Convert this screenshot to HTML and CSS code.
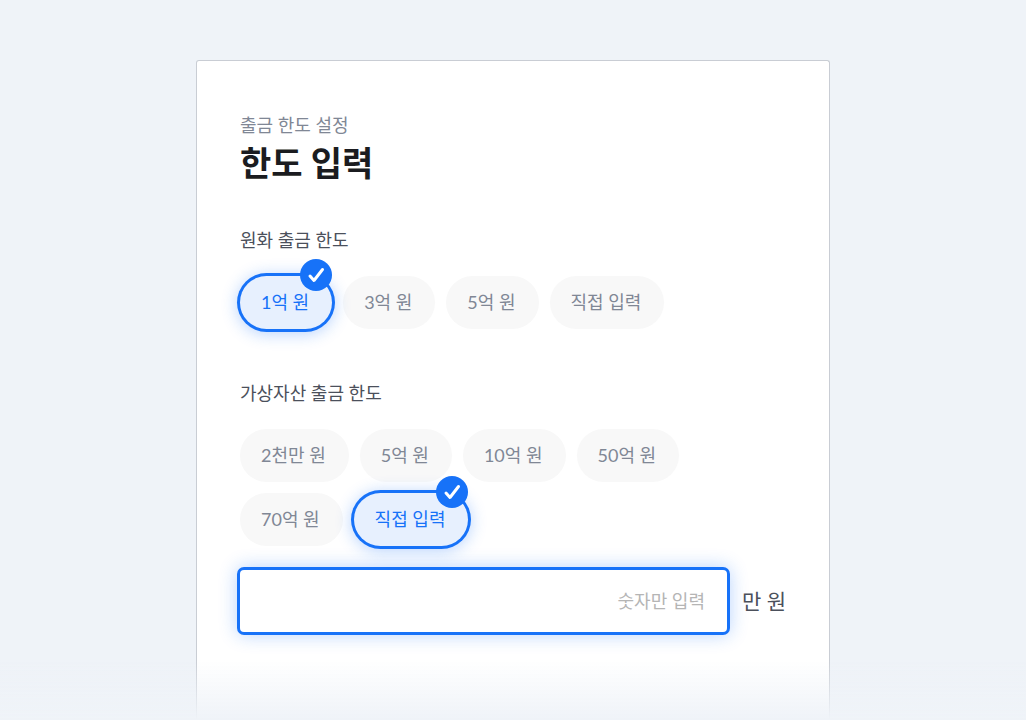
FILE: index.html
```html
<!DOCTYPE html>
<html lang="ko">
<head>
    <meta charset="UTF-8">
    <meta name="viewport" content="width=device-width, initial-scale=1.0">
    <title>한도 입력</title>
    <link rel="stylesheet" href="styles.css">
</head>
<body>

<main class="card">
    <!-- Page heading -->
    <header class="card-header">
        <p class="subtitle">출금 한도 설정</p>
        <h1 class="title">한도 입력</h1>
    </header>

    <form class="limit-form">
        <!-- KRW withdrawal limit -->
        <fieldset class="group">
            <legend class="group-title">원화 출금 한도</legend>
            <div class="chips">
                <label class="chip">
                    <input type="radio" name="krw" value="1" checked>
                    <span>1억 원</span>
                    <svg class="check" viewBox="0 0 32 32" aria-hidden="true"><circle cx="16" cy="16" r="16"/><path d="M10 17l4 4.500L22.500 10.500"/></svg>
                </label>
                <label class="chip">
                    <input type="radio" name="krw" value="3">
                    <span>3억 원</span>
                    <svg class="check" viewBox="0 0 32 32" aria-hidden="true"><circle cx="16" cy="16" r="16"/><path d="M10 17l4 4.500L22.500 10.500"/></svg>
                </label>
                <label class="chip">
                    <input type="radio" name="krw" value="5">
                    <span>5억 원</span>
                    <svg class="check" viewBox="0 0 32 32" aria-hidden="true"><circle cx="16" cy="16" r="16"/><path d="M10 17l4 4.500L22.500 10.500"/></svg>
                </label>
                <label class="chip">
                    <input type="radio" name="krw" value="custom">
                    <span>직접 입력</span>
                    <svg class="check" viewBox="0 0 32 32" aria-hidden="true"><circle cx="16" cy="16" r="16"/><path d="M10 17l4 4.500L22.500 10.500"/></svg>
                </label>
            </div>
        </fieldset>

        <!-- Virtual asset withdrawal limit -->
        <fieldset class="group">
            <legend class="group-title">가상자산 출금 한도</legend>
            <div class="chips">
                <label class="chip">
                    <input type="radio" name="asset" value="0.2">
                    <span>2천만 원</span>
                    <svg class="check" viewBox="0 0 32 32" aria-hidden="true"><circle cx="16" cy="16" r="16"/><path d="M10 17l4 4.500L22.500 10.500"/></svg>
                </label>
                <label class="chip">
                    <input type="radio" name="asset" value="5">
                    <span>5억 원</span>
                    <svg class="check" viewBox="0 0 32 32" aria-hidden="true"><circle cx="16" cy="16" r="16"/><path d="M10 17l4 4.500L22.500 10.500"/></svg>
                </label>
                <label class="chip">
                    <input type="radio" name="asset" value="10">
                    <span>10억 원</span>
                    <svg class="check" viewBox="0 0 32 32" aria-hidden="true"><circle cx="16" cy="16" r="16"/><path d="M10 17l4 4.500L22.500 10.500"/></svg>
                </label>
                <label class="chip">
                    <input type="radio" name="asset" value="50">
                    <span>50억 원</span>
                    <svg class="check" viewBox="0 0 32 32" aria-hidden="true"><circle cx="16" cy="16" r="16"/><path d="M10 17l4 4.500L22.500 10.500"/></svg>
                </label>
                <label class="chip">
                    <input type="radio" name="asset" value="70">
                    <span>70억 원</span>
                    <svg class="check" viewBox="0 0 32 32" aria-hidden="true"><circle cx="16" cy="16" r="16"/><path d="M10 17l4 4.500L22.500 10.500"/></svg>
                </label>
                <label class="chip">
                    <input type="radio" name="asset" value="custom" checked>
                    <span>직접 입력</span>
                    <svg class="check" viewBox="0 0 32 32" aria-hidden="true"><circle cx="16" cy="16" r="16"/><path d="M10 17l4 4.500L22.500 10.500"/></svg>
                </label>
            </div>
            <div class="amount">
                <input class="amount-input" id="amount" type="text" inputmode="numeric" placeholder="숫자만 입력">
                <label class="amount-unit" for="amount">만 원</label>
            </div>
        </fieldset>
    </form>
</main>

<div class="fade"></div>

</body>
</html>
```
FILE: styles.css
```css
* {
    box-sizing: border-box;
}

body {
    margin: 0;
    padding-top: 60px;
    background-color: #eff3f8;
    font-family: Lato, "Noto Sans CJK KR", sans-serif;
    font-size: 18px;
    line-height: 28px;
    color: #4b505b;
}

.card {
    max-width: 634px;
    min-height: calc(100vh - 60px);
    margin: 0 auto;
    padding: 50px 43px;
    background-color: #fff;
    border: 1px solid #c9cdd4;
    border-bottom: none;
    border-radius: 3px 3px 0 0;
}

.card-header {
    margin-bottom: 39px;
}

.subtitle {
    margin: 0;
    color: #808795;
}

.title {
    margin: 0;
    font-size: 34px;
    line-height: 48px;
    font-weight: bold;
    color: #1b1c20;
}

.group {
    min-width: 0;
    margin: 0 0 50px;
    padding: 0;
    border: none;
}

.group-title {
    padding: 0;
    margin-bottom: 22px;
}

.chips {
    display: flex;
    flex-wrap: wrap;
    gap: 11px;
}

.chip {
    position: relative;
    padding: 12px 23px 13px 21px;
    border-radius: 27px;
    background-color: #f8f8f8;
    color: #808795;
    cursor: pointer;
}

.chip input {
    position: absolute;
    opacity: 0;
}

.chip:has(input:checked) {
    z-index: 1;
    background-color: #e7f0fe;
    color: #1772f8;
    box-shadow: 0 0 0 3px #1772f8, 0 2px 16px 3px rgba(23, 114, 248, 0.3);
}

/* Check badge on the selected chip */
.check {
    display: none;
    position: absolute;
    top: -17px;
    right: 0;
    width: 32px;
    height: 32px;
    fill: #1772f8;
}

.check path {
    fill: none;
    stroke: #fff;
    stroke-width: 3;
    stroke-linecap: round;
    stroke-linejoin: round;
}

.chip input:checked ~ .check {
    display: block;
}

.amount {
    display: flex;
    align-items: center;
    gap: 15px;
    margin-top: 24px;
}

.amount-input {
    flex: 1;
    min-width: 0;
    height: 62px;
    padding: 0 22px;
    border: none;
    border-radius: 4px;
    outline: none;
    background-color: #fff;
    box-shadow: 0 0 0 3px #1772f8, 0 0 18px 3px rgba(23, 114, 248, 0.3);
    font: inherit;
    color: #4b505b;
    text-align: right;
}

.amount-input::placeholder {
    color: #b5b5b5;
    opacity: 1;
}

.amount-unit {
    font-size: 21px;
}

/* Fades the card into the page at the bottom */
.fade {
    position: fixed;
    left: 0;
    right: 0;
    bottom: 0;
    height: 60px;
    background: linear-gradient(rgba(239, 243, 248, 0), #eff3f8);
    pointer-events: none;
}
```
